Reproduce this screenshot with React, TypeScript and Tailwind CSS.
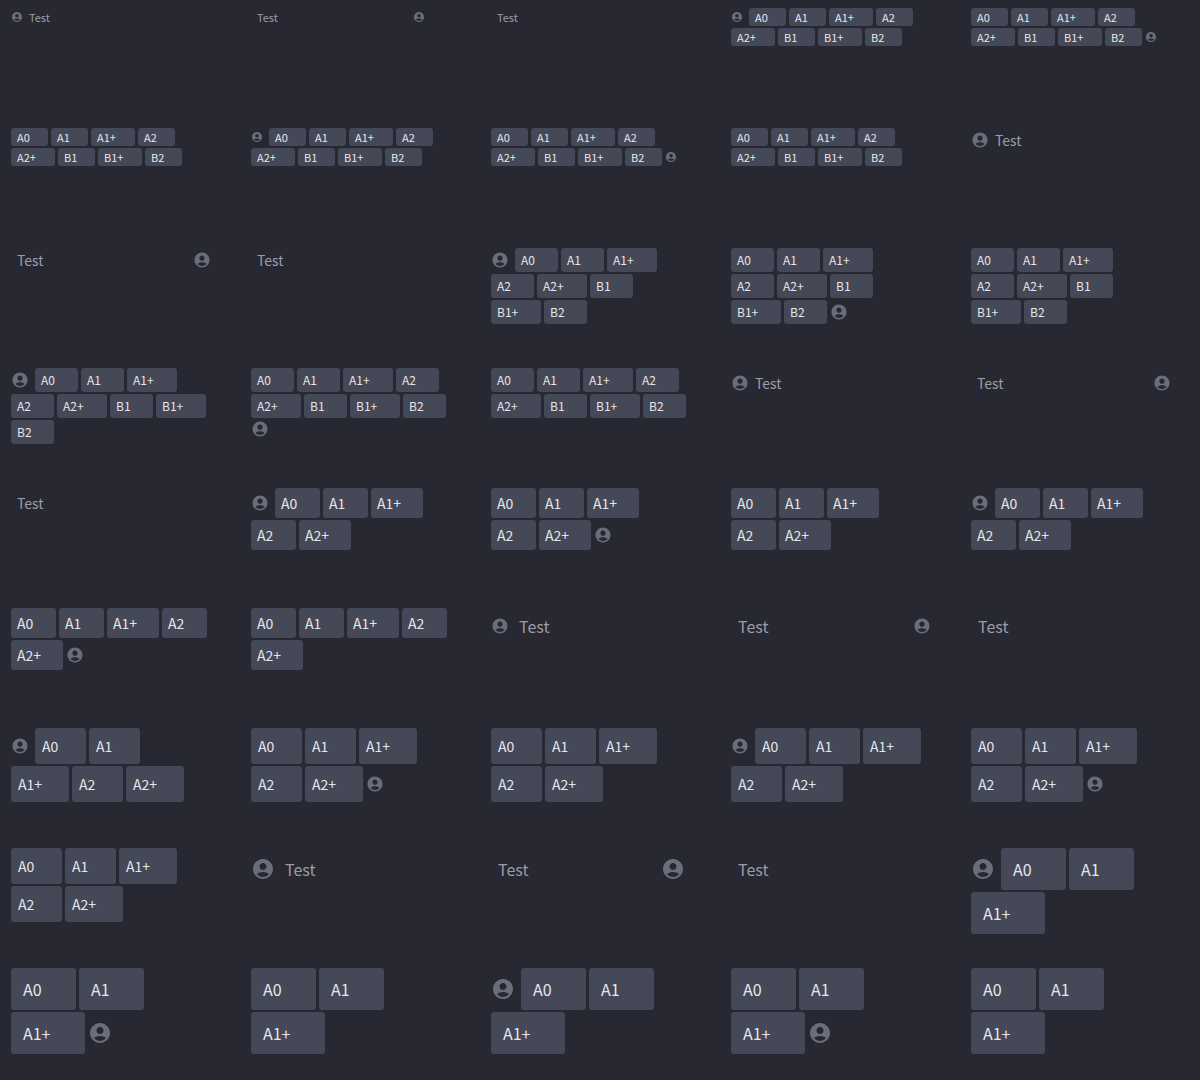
const ICON = "M12 2C6.48 2 2 6.48 2 12s4.48 10 10 10 10-4.48 10-10S17.52 2 12 2zm0 4c1.93 0 3.5 1.57 3.5 3.5S13.93 13 12 13s-3.5-1.57-3.5-3.5S10.07 6 12 6zm0 14c-2.03 0-4.43-.82-6.14-2.88C7.55 15.8 9.68 15 12 15s4.45.8 6.14 2.12C16.43 19.18 14.03 20 12 20z";

type Size = {
  h: string; short: string; long: string; pad: string; font: string; radius: string;
  icon: string; testFont: string; testPad: string; testLeft: string; width: string; rowH: string;
};

const xs: Size = { h: "h-[18px]", short: "w-[37px]", long: "w-[44px]", pad: "pl-[6px]", font: "text-[11px]", radius: "rounded-[3px]", icon: "size-3", testFont: "text-[11px]", testPad: "pl-[6px]", testLeft: "pl-[3px]", width: "w-[174px]", rowH: "h-[18px]" };
const sm: Size = { h: "h-6", short: "w-[43px]", long: "w-[50px]", pad: "pl-[6px]", font: "text-[12px]", radius: "rounded-[3px]", icon: "size-[18px]", testFont: "text-[14px]", testPad: "pl-[6px]", testLeft: "pl-[3px]", width: "w-[200px]", rowH: "h-6" };
const md: Size = { h: "h-[30px]", short: "w-[45px]", long: "w-[52px]", pad: "pl-[6px]", font: "text-[14px]", radius: "rounded-[3px]", icon: "size-[18px]", testFont: "text-[14px]", testPad: "pl-[6px]", testLeft: "pl-[3px]", width: "w-[200px]", rowH: "h-[30px]" };
const lg: Size = { h: "h-9", short: "w-[51px]", long: "w-[58px]", pad: "pl-[7px]", font: "text-[14px]", radius: "rounded-[3px]", icon: "size-[18px]", testFont: "text-[16px]", testPad: "pl-[7px]", testLeft: "pl-[7px]", width: "w-[200px]", rowH: "h-9" };
const xl: Size = { h: "h-[42px]", short: "w-[65px]", long: "w-[74px]", pad: "pl-3", font: "text-[16px]", radius: "rounded-[3px]", icon: "size-6", testFont: "text-[16px]", testPad: "pl-[7px]", testLeft: "pl-[7px]", width: "w-[194px]", rowH: "h-[42px]" };

function Icon({ s, extra = "" }: { s: Size; extra?: string }) {
  return (
    <svg viewBox="0 0 24 24" className={`${s.icon} shrink-0 fill-[#6c6d7b] ${extra}`}>
      <path fillRule="evenodd" d={ICON} />
    </svg>
  );
}

function Tag({ s, label }: { s: Size; label: string }) {
  const wide = label.endsWith("+");
  return (
    <div className={`flex items-center ${s.h} ${wide ? s.long : s.short} ${s.pad} ${s.font} ${s.radius} bg-[#454856] text-[#e5e7eb]`}>
      {label}
    </div>
  );
}

function TextCell({ s, mode }: { s: Size; mode: "left" | "right" | "none" }) {
  if (mode === "left") {
    return (
      <div className={`flex items-center ${s.rowH}`}>
        <Icon s={s} />
        <span className={`${s.testLeft} ml-[3px] ${s.testFont} text-[#9c9ca6]`}>Test</span>
      </div>
    );
  }
  return (
    <div className={`flex items-center justify-between ${s.rowH} ${s.width}`}>
      <span className={`${s.testPad} ${s.testFont} text-[#9c9ca6]`}>Test</span>
      {mode === "right" && <Icon s={s} />}
    </div>
  );
}

function TagsCell({ s, rows, mode }: { s: Size; rows: string[][]; mode: "left" | "right" | "none" }) {
  return (
    <div className="flex flex-col gap-y-[2px]">
      {rows.map((row, i) => (
        <div key={i} className="flex items-center gap-x-[3px]">
          {mode === "left" && i === 0 && <Icon s={s} extra="mr-[3px]" />}
          {row.map((l) => (
            <Tag key={l} s={s} label={l} />
          ))}
          {mode === "right" && i === rows.length - 1 && <Icon s={s} />}
        </div>
      ))}
    </div>
  );
}

const x8 = [["A0", "A1", "A1+", "A2"], ["A2+", "B1", "B1+", "B2"]];
const s3 = [["A0", "A1", "A1+"], ["A2", "A2+", "B1"], ["B1+", "B2"]];
const s4L = [["A0", "A1", "A1+"], ["A2", "A2+", "B1", "B1+"], ["B2"]];
const s4R = [["A0", "A1", "A1+", "A2"], ["A2+", "B1", "B1+", "B2"], []];
const m3 = [["A0", "A1", "A1+"], ["A2", "A2+"]];
const m4 = [["A0", "A1", "A1+", "A2"], ["A2+"]];
const l2 = [["A0", "A1"], ["A1+", "A2", "A2+"]];
const xlL = [["A0", "A1"], ["A1+"]];

type Rows = string[][];
function Group({ s, aLeft, a, aNone, bLeft, bRight, bNone }: { s: Size; aLeft: Rows; a: Rows; aNone: Rows; bLeft: Rows; bRight: Rows; bNone: Rows }) {
  return (
    <>
      <Cell><TextCell s={s} mode="left" /></Cell>
      <Cell><TextCell s={s} mode="right" /></Cell>
      <Cell><TextCell s={s} mode="none" /></Cell>
      <Cell><TagsCell s={s} rows={aLeft} mode="left" /></Cell>
      <Cell><TagsCell s={s} rows={a} mode="right" /></Cell>
      <Cell><TagsCell s={s} rows={aNone} mode="none" /></Cell>
      <Cell><TagsCell s={s} rows={bLeft} mode="left" /></Cell>
      <Cell><TagsCell s={s} rows={bRight} mode="right" /></Cell>
      <Cell><TagsCell s={s} rows={bNone} mode="none" /></Cell>
    </>
  );
}

function Cell({ children }: { children: React.ReactNode }) {
  return <div className="h-[120px] w-60 pt-2 pl-[11px]">{children}</div>;
}

export default function App() {
  return (
    <div className="h-[1080px] w-[1200px] overflow-hidden bg-[#282833] font-['Noto_Sans_CJK_SC',sans-serif]">
      <div className="grid grid-cols-[repeat(5,240px)] auto-rows-[120px]">
        <Group s={xs} aLeft={x8} a={x8} aNone={x8} bLeft={x8} bRight={x8} bNone={x8} />
        <Group s={sm} aLeft={s3} a={s3} aNone={s3} bLeft={s4L} bRight={s4R} bNone={x8} />
        <Group s={md} aLeft={m3} a={m3} aNone={m3} bLeft={m3} bRight={m4} bNone={m4} />
        <Group s={lg} aLeft={l2} a={m3} aNone={m3} bLeft={m3} bRight={m3} bNone={m3} />
        <Group s={xl} aLeft={xlL} a={xlL} aNone={xlL} bLeft={xlL} bRight={xlL} bNone={xlL} />
      </div>
    </div>
  );
}
